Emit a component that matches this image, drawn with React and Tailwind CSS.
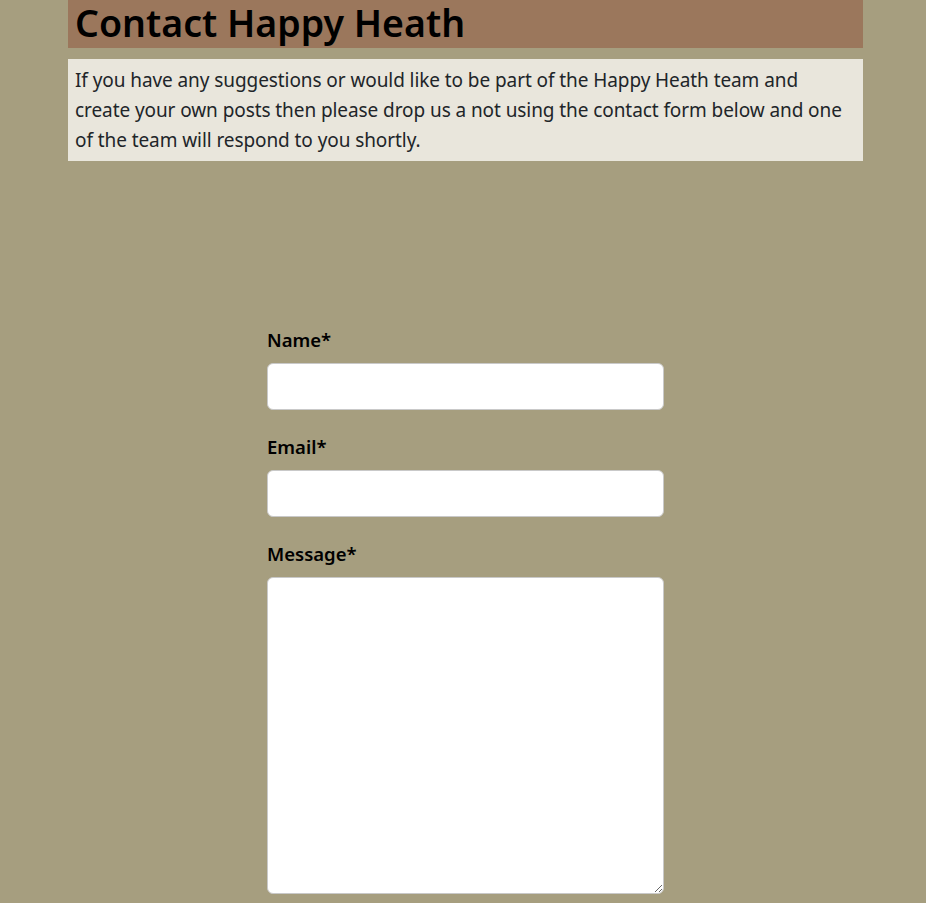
import React from "react";

const Field = ({ label, children }) => {
    return (
        <div className="flex flex-col">
            <label className="text-[18.5px] font-semibold text-black leading-[28px] mb-[9px]">
                {label}
            </label>
            {children}
        </div>
    );
};

const App = () => {
    return (
        <div
            className="min-h-[903px] bg-[#a69e7f] overflow-hidden"
            style={{ fontFamily: '"Noto Sans", "Open Sans", sans-serif' }}
        >
            <div className="mx-[68px] w-[795px]">
                <h1 className="bg-[#9b775c] h-[48px] px-[7px] text-[37.5px] leading-[46px] font-semibold text-black">
                    Contact Happy Heath
                </h1>

                <p className="mt-[11px] bg-[#e9e6dc] px-[7px] py-[6px] text-[19px] tracking-[-0.08px] leading-[30px] text-[#212529]">
                    If you have any suggestions or would like to be part of the Happy
                    Heath team and create your own posts then please drop us a not using
                    the contact form below and one of the team will respond to you
                    shortly.
                </p>

                <form className="mt-[165px] ml-[199px] w-[397px] flex flex-col gap-[23px]">
                    <Field label="Name*">
                        <input
                            type="text"
                            className="h-[47px] bg-white border border-[#c9c9c9] rounded-[6px]"
                        />
                    </Field>
                    <Field label="Email*">
                        <input
                            type="email"
                            className="h-[47px] bg-white border border-[#c9c9c9] rounded-[6px]"
                        />
                    </Field>
                    <Field label="Message*">
                        <textarea className="h-[317px] bg-white border border-[#c9c9c9] rounded-[6px]" />
                    </Field>
                </form>
            </div>
        </div>
    );
};

export default App;
